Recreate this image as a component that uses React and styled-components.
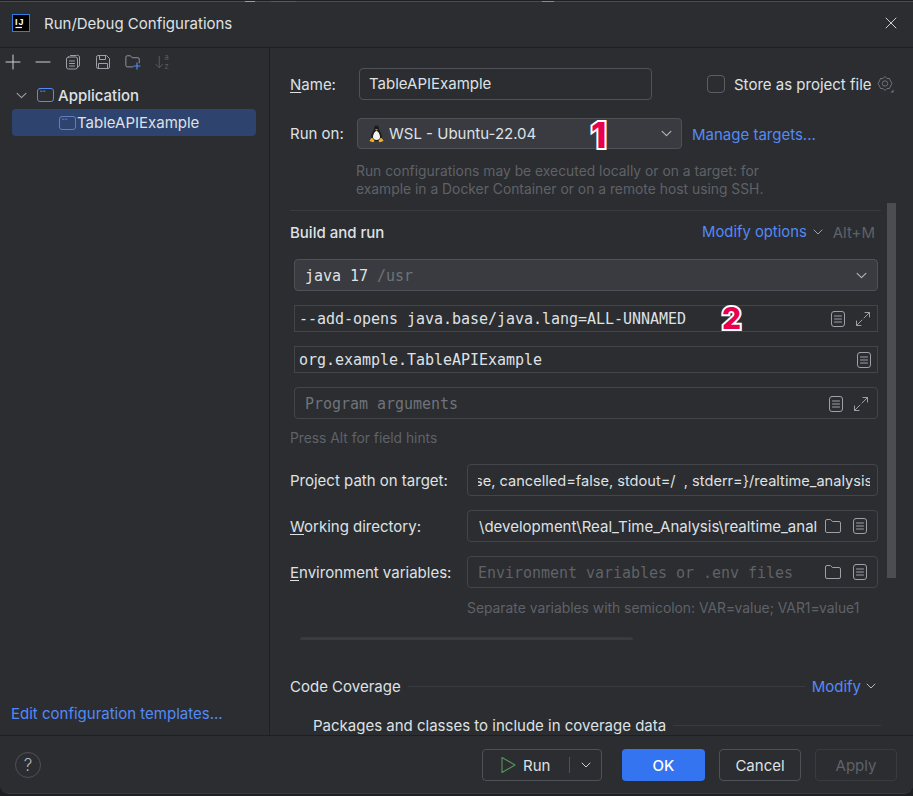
import styled, { createGlobalStyle } from 'styled-components';

const GlobalStyle = createGlobalStyle`
  html, body {
    margin: 0;
    padding: 0;
    height: 100%;
    background: #1e1f22;
    overflow: hidden;
  }
  * { box-sizing: border-box; }
`;

//small svg helpers, everything on a 16 box
const Svg = ({ size = 16, children }) => (
  <svg width={size} height={size} viewBox="0 0 16 16" fill="none" stroke="currentColor" strokeWidth="1" strokeLinecap="round" strokeLinejoin="round">
    {children}
  </svg>
);

const Plus = () => <Svg><path d="M8 1v14M1 8h14" /></Svg>;
const Minus = () => <Svg><path d="M1 8h14" /></Svg>;
const CopyIcon = () => (
  <Svg>
    <path d="M5.5 1.5h6a2 2 0 0 1 3 1.5v8a2 2 0 0 1-1.5 2" />
    <rect x="1.5" y="3" width="11" height="12" rx="2" />
    <path d="M4.5 7h5M4.5 9.5h5M4.5 12h5" />
  </Svg>
);
const SaveIcon = () => (
  <Svg>
    <path d="M1.5 3a1.5 1.5 0 0 1 1.5-1.5h8.5l3 3V13a1.5 1.5 0 0 1-1.5 1.5H3A1.5 1.5 0 0 1 1.5 13z" />
    <path d="M4.5 1.5v4h6v-4M3.5 14.5V9.5h9v5" />
  </Svg>
);
const FolderPlus = () => (
  <svg width="18" height="16" viewBox="0 0 18 16" fill="none" strokeLinecap="round" strokeLinejoin="round">
    <path d="M9 13.5H2.5a1.5 1.5 0 0 1-1.5-1.5V2.5A1.5 1.5 0 0 1 2.5 1h3.6l2 2.2h6.4A1.5 1.5 0 0 1 16 4.7V9" stroke="#9da0a8" />
    <path d="M13.5 9v7M10 12.5h7" stroke="#548af7" strokeWidth="1.3" />
  </svg>
);
const SortIcon = () => (
  <svg width="17" height="18" viewBox="0 0 17 18" fill="none" stroke="#5a5d63" strokeLinecap="round" strokeLinejoin="round">
    <path d="M4.5 3v12M1 11.5L4.5 15 8 11.500" />
    <text x="10" y="6.500" fill="#5a5d63" stroke="none" fontFamily="Inter, sans-serif" fontSize="8">a</text>
    <text x="10" y="16" fill="#5a5d63" stroke="none" fontFamily="Inter, sans-serif" fontSize="8">z</text>
  </svg>
);
const AppIcon = ({ dim }) => (
  <svg width="17" height="14" viewBox="0 0 17 14" fill="none" stroke={dim ? '#5f7fc0' : '#548af7'} strokeLinecap="round">
    <rect x=".5" y=".5" width="16" height="13" rx="2.5" />
    <path d="M3.5 3.2h1.5M6.5 3.2h1.5" />
  </svg>
);
const Chevron = ({ size = 10 }) => (
  <svg width={size} height={size} viewBox="0 0 10 10" fill="none" stroke="currentColor" strokeWidth="1" strokeLinecap="round" strokeLinejoin="round">
    <path d="M1 3l4 4 4-4" />
  </svg>
);
const DocIcon = () => (
  <svg width="14" height="16" viewBox="0 0 14 16" fill="none" stroke="#9da0a8" strokeLinecap="round">
    <rect x=".5" y=".5" width="13" height="15" rx="2.5" />
    <path d="M3.5 5h7M3.5 8h7M3.5 11h7" />
  </svg>
);
const ExpandIcon = () => (
  <Svg><path d="M10 1.500h4.500V6M14.500 1.500L9 7M6 14.500H1.500V10M1.500 14.500L7 9" /></Svg>
);
const FolderIcon = () => (
  <svg width="16" height="14" viewBox="0 0 16 14" fill="none" stroke="#9da0a8" strokeLinejoin="round">
    <path d="M.5 2A1.500 1.500 0 0 1 2 .5h3.400l2 2H14A1.500 1.500 0 0 1 15.500 4v8a1.500 1.500 0 0 1-1.500 1.500H2A1.500 1.500 0 0 1 .5 12z" />
  </svg>
);
const GearIcon = () => (
  <svg width="17" height="18" viewBox="0 0 17 18" fill="none" stroke="#6f737a" strokeLinejoin="round">
    <path d="M8 1.500L10 3.500H12.500L13.500 6L15 8.500L13.500 11L12.500 13.500H10L8 15.500L6 13.500H3.500L2.500 11L1 8.500L2.500 6L3.500 3.500H6Z" />
    <circle cx="8" cy="8.500" r="2.700" />
    <path d="M16.500 14.500v3h-3z" fill="#6f737a" stroke="none" />
  </svg>
);
const Penguin = () => (
  <svg width="15" height="18" viewBox="0 0 15 18">
    <path d="M7.500.5C5.500.5 5 2.300 5 4c0 1.500-3 4.500-3 8 0 2.500 2.500 4 5.500 4s5.500-1.500 5.500-4c0-3.500-3-6.500-3-8C10 2.300 9.500.5 7.500.5z" fill="#1b1b1b" />
    <path d="M7.500 6C5.800 6 4 9.500 4 12c0 2 1.500 3 3.500 3s3.500-1 3.500-3c0-2.500-1.800-6-3.500-6z" fill="#f2f2f2" />
    <path d="M6 4.300h3L7.500 5.800z" fill="#e8a820" />
    <path d="M3 12.500L.5 15.500l1 1 3 .7 1-1.500zM12 12.500l2.500 3-1 1-3 .7-1-1.500z" fill="#f0b020" />
  </svg>
);
const RunIcon = () => (
  <svg width="15" height="18" viewBox="0 0 15 18" fill="none" stroke="#57965c" strokeWidth="1.1" strokeLinejoin="round">
    <path d="M1 1.500v15L14 9z" />
  </svg>
);
const LogoIcon = () => (
  <svg width="18" height="18" viewBox="0 0 18 18">
    <rect x=".5" y=".5" width="17" height="17" fill="#000" stroke="#2f7ee8" />
    <text x="3" y="10.500" fill="#fff" fontFamily="'Liberation Sans', sans-serif" fontWeight="700" fontSize="9" letterSpacing="1">IJ</text>
    <path d="M3.500 13.500h6.500" stroke="#fff" strokeWidth="1.200" fill="none" />
  </svg>
);

export default function App() {
  return (
    <>
      <GlobalStyle />
      <Dialog>
        <TopStrip />
        <TitleBar>
          <LogoIcon />
          <Title>Run/Debug Configurations</Title>
          <CloseButton>
            <svg width="12" height="12" viewBox="0 0 12 12" stroke="#ced0d6" strokeLinecap="round"><path d="M1 1l10 10M11 1L1 11" /></svg>
          </CloseButton>
        </TitleBar>
        <Body>
          <Sidebar>
            <Toolbar>
              <ToolButton><Plus /></ToolButton>
              <ToolButton><Minus /></ToolButton>
              <ToolButton><CopyIcon /></ToolButton>
              <ToolButton><SaveIcon /></ToolButton>
              <ToolButton><FolderPlus /></ToolButton>
              <ToolButton><SortIcon /></ToolButton>
            </Toolbar>
            <Tree>
              <TreeRow>
                <TreeChevron><Chevron size={11} /></TreeChevron>
                <AppIcon />
                <TreeGroup>Application</TreeGroup>
              </TreeRow>
              <SelectedRow>
                <AppIcon dim />
                <TreeItem>TableAPIExample</TreeItem>
              </SelectedRow>
            </Tree>
            <TemplatesLink>Edit configuration templates...</TemplatesLink>
          </Sidebar>
          <Main>
            <Form>
              <NameRow>
                <NameLabel><u>N</u>ame:</NameLabel>
                <NameInput>TableAPIExample</NameInput>
                <Checkbox />
                <StoreLabel>Store as project file</StoreLabel>
                <GearIcon />
              </NameRow>
              <RunOnRow>
                <RunOnLabel>Run on:</RunOnLabel>
                <RunOnSelect>
                  <Penguin />
                  <RunOnValue>WSL - Ubuntu-22.04</RunOnValue>
                  <SelectChevron><Chevron size={11} /></SelectChevron>
                  <Callout $left={233} $top={-3} $size={35}>1</Callout>
                </RunOnSelect>
                <ManageLink>Manage targets...</ManageLink>
              </RunOnRow>
              <RunOnHint>
                Run configurations may be executed locally or on a target: for<br />
                example in a Docker Container or on a remote host using SSH.
              </RunOnHint>
              <Separator />
              <BuildRow>
                <BuildTitle>Build and run</BuildTitle>
                <ModifyLink>Modify options</ModifyLink>
                <ModifyChevron><Chevron /></ModifyChevron>
                <Shortcut>Alt+M</Shortcut>
              </BuildRow>
              <JavaSelect>
                <Mono>java 17</Mono>
                <MonoDim>/usr</MonoDim>
                <SelectChevron><Chevron size={11} /></SelectChevron>
              </JavaSelect>
              <SquareField>
                <Mono>--add-opens java.base/java.lang=ALL-UNNAMED</Mono>
                <Callout $left={427} $top={-4} $size={30}>2</Callout>
                <FieldIcons>
                  <DocIcon />
                  <ExpandIcon />
                </FieldIcons>
              </SquareField>
              <SquareField>
                <Mono>org.example.TableAPIExample</Mono>
                <FieldIcons>
                  <DocIcon />
                </FieldIcons>
              </SquareField>
              <ArgsField>
                <MonoDim>Program arguments</MonoDim>
                <FieldIcons>
                  <DocIcon />
                  <ExpandIcon />
                </FieldIcons>
              </ArgsField>
              <FieldHint>Press Alt for field hints</FieldHint>
              <LabeledRow $first>
                <FieldLabel>Project path on target:</FieldLabel>
                <PathInput>
                  <ClipText>
                    <ScrolledText $shift={-3} $size={14.6}>se, cancelled=false, stdout=/{'\u00a0\u00a0'}, stderr={'}'}/realtime_analysis</ScrolledText>
                  </ClipText>
                </PathInput>
              </LabeledRow>
              <LabeledRow>
                <FieldLabel><u>W</u>orking directory:</FieldLabel>
                <PathInput>
                  <ClipText>
                    <ScrolledText $shift={1} $size={15}>\development\Real_Time_Analysis\realtime_anal</ScrolledText>
                  </ClipText>
                  <PathIcons>
                    <FolderIcon />
                    <DocIcon />
                  </PathIcons>
                </PathInput>
              </LabeledRow>
              <LabeledRow>
                <FieldLabel><u>E</u>nvironment variables:</FieldLabel>
                <PathInput>
                  <ClipText>
                    <MonoPlaceholder>Environment variables or .env files</MonoPlaceholder>
                  </ClipText>
                  <PathIcons>
                    <FolderIcon />
                    <DocIcon />
                  </PathIcons>
                </PathInput>
              </LabeledRow>
              <EnvHint>Separate variables with semicolon: VAR=value; VAR1=value1</EnvHint>
              <CutOffCard />
              <CoverageRow>
                <CoverageTitle>Code Coverage</CoverageTitle>
                <Rule />
                <CoverageLink>Modify</CoverageLink>
                <CoverageChevron><Chevron /></CoverageChevron>
              </CoverageRow>
              <PackagesRow>
                <PackagesTitle>Packages and classes to include in coverage data</PackagesTitle>
                <Rule />
              </PackagesRow>
            </Form>
            <ScrollThumb />
          </Main>
        </Body>
        <Footer>
          <HelpButton>?</HelpButton>
          <RunSplit>
            <RunPart>
              <RunIcon />
              <RunLabel>Run</RunLabel>
            </RunPart>
            <RunArrow><Chevron /></RunArrow>
          </RunSplit>
          <OkButton>OK</OkButton>
          <FooterButton>Cancel</FooterButton>
          <FooterButton $disabled>Apply</FooterButton>
        </Footer>
      </Dialog>
    </>
  );
}

const Dialog = styled.div`
  width: 913px;
  height: 794px;
  display: flex;
  flex-direction: column;
  background: #2b2d30;
  color: #dfe1e5;
  font-family: Inter, "Liberation Sans", sans-serif;
  font-size: 15px;
  overflow: hidden;
  border-bottom: 1px solid #393b40;
  border-radius: 0 0 9px 9px;
`;

// what shows of the window behind the dialog: one dark row and one grey row with a few bright bits
const TopStrip = styled.div`
  height: 2px;
  flex: none;
  border-top: 1px solid #1e1f22;
  background: linear-gradient(
    to right,
    #4a4c50 245px,
    #9a9ca0 245px,
    #9a9ca0 255px,
    #4a4c50 255px,
    #4a4c50 271px,
    #3f5d9c 271px,
    #3f5d9c 296px,
    #4a4c50 296px,
    #4a4c50 542px,
    #8a8c90 542px,
    #8a8c90 554px,
    #4a4c50 554px
  );
`;

const TitleBar = styled.div`
  height: 46px;
  flex: none;
  display: flex;
  align-items: center;
  padding: 0 16px 3px 12px;
  border-bottom: 1px solid #1e1f22;
`;

const Title = styled.div`
  margin-left: 14px;
  color: #dfe1e5;
`;

const CloseButton = styled.div`
  margin-left: auto;
  display: flex;
`;

const Body = styled.div`
  flex: 1;
  min-height: 0;
  display: flex;
`;

const Sidebar = styled.div`
  width: 270px;
  flex: none;
  display: flex;
  flex-direction: column;
  border-right: 1px solid #1e1f22;
`;

const Toolbar = styled.div`
  height: 28px;
  flex: none;
  display: flex;
  align-items: center;
  padding: 0 0 0 5px;
  gap: 14px;
  color: #ced0d6;
`;

const ToolButton = styled.div`
  display: flex;
  width: 16px;
  justify-content: center;
  &:nth-child(n + 3) {
    color: #9da0a8;
  }
`;

const Tree = styled.div`
  flex: 1;
  padding-top: 6px;
`;

const TreeRow = styled.div`
  height: 26px;
  margin-bottom: 1px;
  display: flex;
  align-items: center;
  padding-left: 16px;
`;

const TreeChevron = styled.div`
  display: flex;
  width: 21px;
  color: #9da0a8;
`;

const TreeGroup = styled.span`
  margin-left: 4px;
  font-weight: 500;
`;

const SelectedRow = styled.div`
  margin: 0 13px 0 12px;
  height: 27px;
  display: flex;
  align-items: center;
  padding-left: 47px;
  background: #2e436e;
  border-radius: 4px;
`;

const TreeItem = styled.span`
  margin-left: 1px;
`;

const TemplatesLink = styled.div`
  padding: 0 0 12px 11px;
  color: #548af7;
`;

const Main = styled.div`
  flex: 1;
  min-width: 0;
  position: relative;
  overflow: hidden;
`;

const Form = styled.div`
  padding: 0 35px 0 20px;
  display: flex;
  flex-direction: column;
`;

const NameRow = styled.div`
  margin-top: 20px;
  height: 32px;
  display: flex;
  align-items: center;
  margin-right: -16px;
`;

const NameLabel = styled.div`
  width: 69px;
  flex: none;
  u { text-underline-offset: 2px; }
`;

const NameInput = styled.div`
  width: 293px;
  height: 32px;
  flex: none;
  border: 1px solid #4e5157;
  border-radius: 4px;
  padding: 0 9px;
  line-height: 29px;
`;

const Checkbox = styled.div`
  width: 18px;
  height: 18px;
  margin-left: 55px;
  flex: none;
  border: 1px solid #5a5d63;
  border-radius: 4px;
`;

const StoreLabel = styled.div`
  margin: 0 5px 0 9px;
  white-space: nowrap;
`;

const RunOnRow = styled.div`
  margin-top: 18px;
  height: 31px;
  display: flex;
  align-items: center;
`;

const RunOnLabel = styled.div`
  width: 67px;
  flex: none;
`;

const RunOnSelect = styled.div`
  position: relative;
  width: 325px;
  height: 31px;
  flex: none;
  display: flex;
  align-items: center;
  padding: 0 9px 0 11px;
  background: #393b40;
  border: 1px solid #4e5157;
  border-radius: 4px;
`;

const RunOnValue = styled.span`
  margin-left: 5px;
`;

const SelectChevron = styled.div`
  margin-left: auto;
  display: flex;
  color: #b4b8bf;
`;

const Callout = styled.span`
  position: absolute;
  left: ${(p) => p.$left}px;
  top: ${(p) => p.$top}px;
  font-family: Inter, "Liberation Sans", sans-serif;
  font-weight: 800;
  font-size: ${(p) => p.$size}px;
  line-height: 1.1;
  color: #e8004f;
  -webkit-text-stroke: 4px #fff;
  paint-order: stroke fill;
`;

const ManageLink = styled.div`
  margin: 1px 0 0 10px;
  color: #548af7;
  white-space: nowrap;
`;

const RunOnHint = styled.div`
  margin: 13px 0 0 66px;
  font-size: 13.85px;
  line-height: 18px;
  color: #5f6268;
  white-space: nowrap;
`;

const Separator = styled.div`
  margin: 12px -3px 0 0;
  height: 1px;
  background: #393b40;
`;

const BuildRow = styled.div`
  margin-top: 11px;
  height: 20px;
  display: flex;
  align-items: center;
`;

const BuildTitle = styled.div`
  font-weight: 500;
  flex: 1;
`;

const ModifyLink = styled.div`
  color: #548af7;
  font-size: 14.8px;
`;

const ModifyChevron = styled.div`
  display: flex;
  margin: 0 10px 0 6px;
  color: #9da0a8;
`;

const Shortcut = styled.div`
  color: #5f6268;
  margin-right: 3px;
`;

const Mono = styled.span`
  font-family: "DejaVu Sans Mono", "Liberation Mono", monospace;
  font-size: 15px;
  letter-spacing: -0.03px;
  white-space: nowrap;
`;

const MonoDim = styled(Mono)`
  color: #6f737a;
`;

const MonoPlaceholder = styled(Mono)`
  display: inline-block;
  margin-top: -2px;
  color: #5f6268;
`;

const JavaSelect = styled.div`
  margin: 17px 0 0 4px;
  height: 32px;
  display: flex;
  align-items: center;
  gap: 9px;
  padding: 1px 10px 0 10px;
  background: #393b40;
  border: 1px solid #4e5157;
  border-radius: 4px;
`;

const SquareField = styled.div`
  position: relative;
  margin: 14px 0 0 4px;
  height: 27px;
  display: flex;
  align-items: center;
  padding: 0 6px 0 4px;
  border: 1px solid #43454a;
`;

const ArgsField = styled.div`
  margin: 14px 0 0 4px;
  height: 32px;
  display: flex;
  align-items: center;
  padding: 1px 8px 0 10px;
  border: 1px solid #43454a;
  border-radius: 4px;
`;

const FieldIcons = styled.div`
  margin-left: auto;
  display: flex;
  align-items: center;
  gap: 10px;
  color: #9da0a8;
`;

const FieldHint = styled.div`
  margin-top: 10px;
  font-size: 13.8px;
  line-height: 18px;
  color: #5f6268;
`;

const LabeledRow = styled.div`
  height: 32px;
  margin-top: ${(p) => (p.$first ? 17 : 14)}px;
  display: flex;
  align-items: center;
`;

const FieldLabel = styled.div`
  width: 177px;
  flex: none;
  white-space: nowrap;
  u { text-underline-offset: 2px; }
`;

const PathInput = styled.div`
  flex: 1;
  min-width: 0;
  height: 32px;
  display: flex;
  align-items: center;
  padding: 0 7px 0 10px;
  border: 1px solid #43454a;
  border-radius: 4px;
`;

const ClipText = styled.div`
  flex: 1;
  min-width: 0;
  overflow: hidden;
  white-space: nowrap;
`;

const ScrolledText = styled.span`
  display: inline-block;
  margin-left: ${(p) => p.$shift}px;
  font-size: ${(p) => p.$size}px;
`;

const PathIcons = styled.div`
  margin-left: 7px;
  flex: none;
  display: flex;
  align-items: center;
  gap: 12px;
  padding-right: 3px;
`;

const EnvHint = styled.div`
  margin: 11px 0 0 177px;
  font-size: 13.85px;
  line-height: 18px;
  color: #5f6268;
  white-space: nowrap;
`;

const CutOffCard = styled.div`
  margin: 20px 0 0 10px;
  width: 333px;
  height: 3px;
  background: #393b40;
  border-radius: 6px 6px 0 0;
`;

const CoverageRow = styled.div`
  margin-top: 36px;
  height: 20px;
  display: flex;
  align-items: center;
  margin-right: -3px;
`;

const CoverageTitle = styled.div`
  white-space: nowrap;
`;

const Rule = styled.div`
  flex: 1;
  height: 1px;
  margin-left: 7px;
  background: #393b40;
`;

const CoverageLink = styled.div`
  margin-left: 7px;
  color: #548af7;
`;

const CoverageChevron = styled.div`
  display: flex;
  margin: 0 5px 0 5px;
  color: #b4b8bf;
`;

const PackagesRow = styled.div`
  margin: 19px -3px 0 23px;
  height: 20px;
  display: flex;
  align-items: center;
`;

const PackagesTitle = styled.div`
  white-space: nowrap;
`;

const ScrollThumb = styled.div`
  position: absolute;
  left: 617px;
  top: 155px;
  width: 9px;
  height: 375px;
  background: #4b4d51;
`;

const Footer = styled.div`
  height: 58px;
  flex: none;
  display: flex;
  align-items: center;
  padding: 0 16px 0 15px;
  border-top: 1px solid #1e1f22;
`;

const HelpButton = styled.div`
  width: 26px;
  height: 26px;
  border: 1px solid #4e5157;
  border-radius: 50%;
  display: flex;
  align-items: center;
  justify-content: center;
  font-size: 17px;
  font-weight: 300;
  color: #b4b8bf;
`;

const RunSplit = styled.div`
  margin-left: auto;
  width: 120px;
  height: 32px;
  display: flex;
  align-items: center;
  border: 1px solid #4e5157;
  border-radius: 4px;
`;

const RunPart = styled.div`
  width: 87px;
  height: 16px;
  display: flex;
  align-items: center;
  gap: 7px;
  padding-left: 18px;
  border-right: 1px solid #4e5157;
`;

const RunLabel = styled.span`
  margin-top: 1px;
`;

const RunArrow = styled.div`
  flex: 1;
  display: flex;
  justify-content: center;
  color: #ced0d6;
`;

const OkButton = styled.div`
  margin-left: 20px;
  width: 83px;
  height: 32px;
  padding-top: 1px;
  display: flex;
  align-items: center;
  justify-content: center;
  background: #3574f0;
  color: #fff;
  border-radius: 4px;
  font-weight: 500;
`;

const FooterButton = styled.div`
  margin-left: 14px;
  width: 82px;
  height: 32px;
  padding-top: 1px;
  display: flex;
  align-items: center;
  justify-content: center;
  border: 1px solid ${(p) => (p.$disabled ? '#393b40' : '#4e5157')};
  border-radius: 4px;
  color: ${(p) => (p.$disabled ? '#5f6268' : '#dfe1e5')};
`;
